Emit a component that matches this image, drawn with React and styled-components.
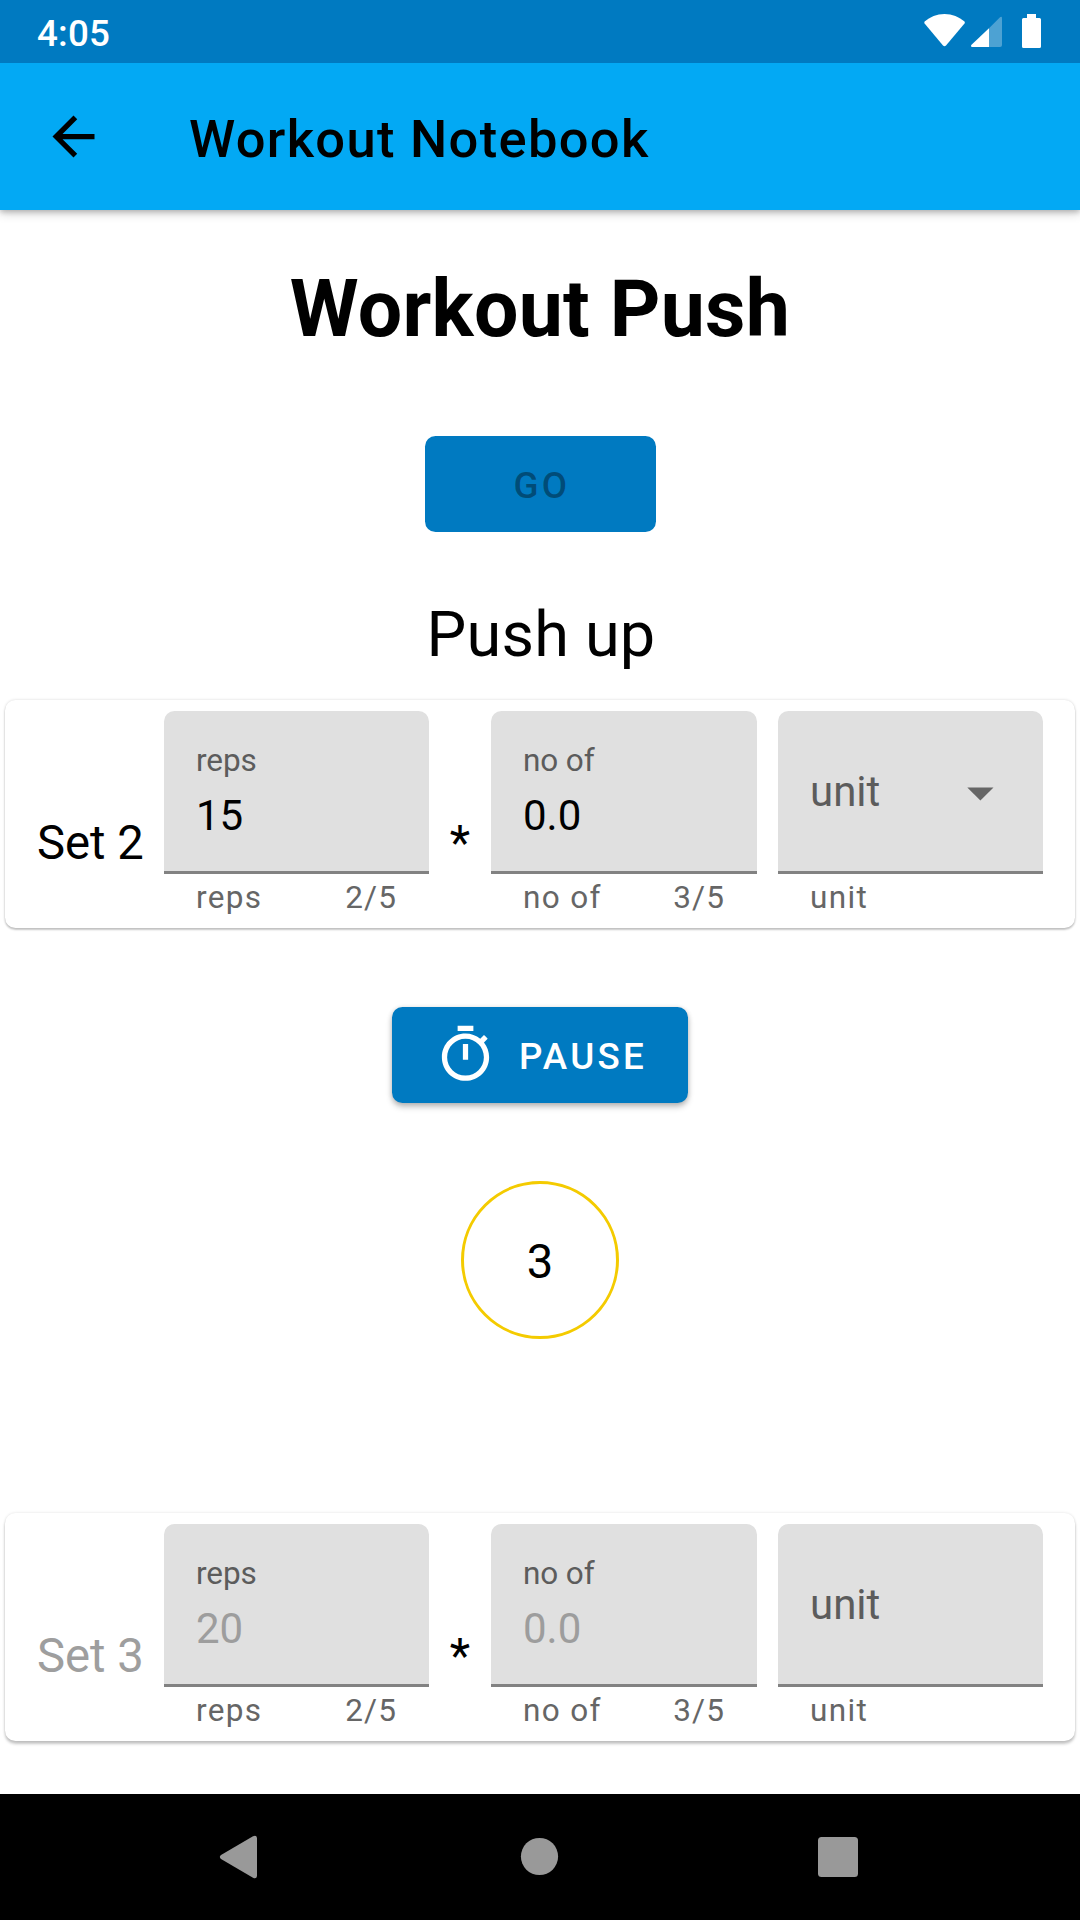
import React from "react";
import styled, { createGlobalStyle } from "styled-components";

const GlobalStyle = createGlobalStyle`
  * { box-sizing: border-box; }
  body { margin: 0; background: #fff; }
`;

const Screen = styled.div`
  display: flex;
  flex-direction: column;
  width: 1080px;
  height: 1920px;
  overflow: hidden;
  background: #fff;
  color: #000;
  font-family: Roboto, "Noto Sans", sans-serif;
`;

const StatusBar = styled.header`
  position: relative;
  z-index: 1;
  display: flex;
  justify-content: space-between;
  align-items: center;
  flex: none;
  height: 63px;
  padding: 3px 36px 0 37px;
  background: #007ac1;
`;

const Clock = styled.span`
  padding-top: 1px;
  color: #fff;
  font-size: 36.75px;
  font-weight: 500;
  line-height: 44px;
  letter-spacing: 0.2px;
`;

const StatusIcons = styled.svg`
  display: block;
  width: 124px;
  height: 40px;
  margin-top: -5px;
`;

const AppBar = styled.nav`
  display: flex;
  align-items: center;
  flex: none;
  height: 147px;
  padding-left: 42px;
  background: #03a9f4;
  box-shadow: 0 3px 10px rgba(0, 0, 0, 0.2), 0 2px 5px rgba(0, 0, 0, 0.18);
`;

const BackIcon = styled.svg`
  display: block;
  width: 63px;
  height: 63px;
`;

const AppTitle = styled.span`
  margin-left: 84px;
  padding-top: 4px;
  font-size: 52.5px;
  font-weight: 500;
  line-height: 62px;
  letter-spacing: 1.3px;
`;

const Content = styled.main`
  display: flex;
  flex-direction: column;
  align-items: center;
  flex: 1;
`;

const Heading = styled.h1`
  margin: 53px 0 81px;
  font-size: 78.75px;
  font-weight: 700;
  line-height: 92px;
  letter-spacing: 0.25px;
`;

const Button = styled.button`
  display: flex;
  align-items: center;
  justify-content: center;
  gap: 22px;
  width: ${(p) => p.$width}px;
  height: 96px;
  padding: 4px 0 0 ${(p) => (p.disabled ? 4 : 1)}px;
  border: 0;
  border-radius: 10.5px;
  background: #007ac1;
  color: ${(p) => (p.disabled ? "rgba(0, 0, 0, 0.38)" : "#fff")};
  box-shadow: ${(p) =>
    p.disabled ? "none" : "0 4px 6px rgba(0, 0, 0, 0.22), 0 1px 5px rgba(0, 0, 0, 0.16)"};
  font-family: inherit;
  font-size: 36.75px;
  font-weight: 500;
  line-height: 44px;
  letter-spacing: 0.0893em;
`;

const TimerIcon = styled.svg`
  display: block;
  width: 63px;
  height: 63px;
  margin-top: -5px;
`;

const Exercise = styled.h2`
  margin: 66px 0 28px;
  padding-left: 2px;
  font-size: 63px;
  font-weight: 400;
  line-height: 74px;
  letter-spacing: 0.2px;
`;

const Card = styled.section`
  display: flex;
  align-items: flex-start;
  width: 1070px;
  height: 228px;
  padding: 11px 32px 0;
  border-radius: 10.5px;
  background: #fff;
  box-shadow: ${(p) =>
    p.$low
      ? "0 3px 3px rgba(0, 0, 0, 0.22), 0 0 3px rgba(0, 0, 0, 0.12)"
      : "0 2px 2px rgba(0, 0, 0, 0.2), 0 0 3px rgba(0, 0, 0, 0.16)"};
`;

const SetName = styled.span`
  flex: none;
  width: 127px;
  margin-top: 104px;
  color: ${(p) => (p.$muted ? "#9e9e9e" : "#000")};
  font-size: 47.25px;
  line-height: 56px;
  white-space: nowrap;
`;

const Times = styled.span`
  flex: none;
  width: 62px;
  margin-top: 104px;
  font-size: 47.25px;
  line-height: 56px;
  text-align: center;
`;

const Field = styled.div`
  flex: none;
  width: ${(p) => p.$width}px;
  margin-left: ${(p) => p.$gap || 0}px;
`;

const FieldBox = styled.div`
  display: flex;
  flex-direction: column;
  height: 163px;
  padding: 31px 32px 0;
  border-bottom: 3px solid #828282;
  border-radius: 10.5px 10.5px 0 0;
  background: #e0e0e0;
`;

const SelectBox = styled(FieldBox)`
  flex-direction: row;
  align-items: center;
  justify-content: space-between;
  padding: 2px 49px 0 32px;
  color: #5c5c5c;
  font-size: 42px;
  line-height: 50px;
`;

const FieldLabel = styled.span`
  color: #5c5c5c;
  font-size: 31.5px;
  line-height: 37px;
  letter-spacing: -0.1px;
`;

const FieldValue = styled.span`
  margin-top: 12px;
  color: ${(p) => (p.$muted ? "#9d9d9d" : "#000")};
  font-size: 42px;
  line-height: 49px;
`;

const Caret = styled.svg`
  display: block;
  width: 27px;
  height: 14px;
  margin-top: 3px;
`;

const Helper = styled.div`
  display: flex;
  justify-content: space-between;
  margin-top: 5px;
  padding: 0 32px;
  color: #666;
  font-size: 31.5px;
  line-height: 37px;
  letter-spacing: 1.35px;
`;

const Counter = styled.span`
  letter-spacing: 1.1px;
`;

const PauseArea = styled.div`
  margin: 79px 0 78px;
`;

const Countdown = styled.div`
  display: flex;
  align-items: center;
  justify-content: center;
  width: 158px;
  height: 158px;
  margin-bottom: 174px;
  padding-top: 3px;
  border: 3px solid #f4cb00;
  border-radius: 50%;
  font-size: 47.25px;
  line-height: 56px;
`;

const NavBar = styled.footer`
  display: flex;
  align-items: center;
  flex: none;
  gap: 236px;
  height: 126px;
  padding-left: 208px;
  background: #000;
`;

const NavIcon = styled.svg`
  display: block;
  width: 64px;
  height: 64px;
  fill: #999;
`;

function TextField({ label, value, count, width, muted }) {
  return (
    <Field $width={width}>
      <FieldBox>
        <FieldLabel>{label}</FieldLabel>
        <FieldValue $muted={muted}>{value}</FieldValue>
      </FieldBox>
      <Helper>
        <span>{label}</span>
        <Counter>{count}</Counter>
      </Helper>
    </Field>
  );
}

function SetCard({ name, reps, amount, muted }) {
  return (
    <Card $low={muted}>
      <SetName $muted={muted}>{name}</SetName>
      <TextField label="reps" value={reps} count="2/5" width={265} muted={muted} />
      <Times>*</Times>
      <TextField label="no of" value={amount} count="3/5" width={266} muted={muted} />
      <Field $width={265} $gap={21}>
        <SelectBox>
          <span>unit</span>
          {!muted && (
            <Caret viewBox="0 0 27 14">
              <path d="M0.3 0.5h26.2L13.4 13.6z" fill="#666" />
            </Caret>
          )}
        </SelectBox>
        <Helper>
          <span>unit</span>
        </Helper>
      </Field>
    </Card>
  );
}

export default function App() {
  return (
    <Screen>
      <GlobalStyle />
      <StatusBar>
        <Clock>4:05</Clock>
        <StatusIcons viewBox="0 0 124 40">
          <path
            d="M4.6 10.6C10 6.1 16.7 3 24.5 3s14.600 3.100 20 7.600q.7.900 0 1.900L26 34.500q-1.500 1.600-3 0L4.600 12.500q-.700-1 0-1.900z"
            fill="#fff"
          />
          <path d="M69 17.300 80 6.300q2-1.300 2 1V34q0 2-2 2H69z" fill="#fff" opacity="0.3" />
          <path d="M69 17.300V36H52.200q-2-.5-.7-2.200z" fill="#fff" />
          <path
            d="M107 3h9v4h3.500q1.500 0 1.500 1.500v27q0 1.500-1.500 1.500h-16q-1.500 0-1.500-1.500v-27q0-1.500 1.500-1.500h3.500z"
            fill="#fff"
          />
        </StatusIcons>
      </StatusBar>
      <AppBar>
        <BackIcon viewBox="0 0 24 24">
          <path d="M20 11H7.830l5.590-5.590L12 4l-8 8 8 8 1.410-1.410L7.830 13H20v-2z" />
        </BackIcon>
        <AppTitle>Workout Notebook</AppTitle>
      </AppBar>
      <Content>
        <Heading>Workout Push</Heading>
        <Button $width={231} disabled>
          GO
        </Button>
        <Exercise>Push up</Exercise>
        <SetCard name="Set 2" reps="15" amount="0.0" />
        <PauseArea>
          <Button $width={296}>
            <TimerIcon viewBox="0 0 24 24">
              <path
                fill="#fff"
                d="M15 1H9v2h6V1zm-4 13h2V8h-2v6zm8.030-6.610 1.420-1.420c-.43-.51-.9-.99-1.410-1.410l-1.420 1.420C16.070 4.740 14.120 4 12 4c-4.970 0-9 4.030-9 9s4.020 9 9 9 9-4.030 9-9c0-2.120-.74-4.070-1.970-5.610zM12 20c-3.870 0-7-3.130-7-7s3.130-7 7-7 7 3.130 7 7-3.130 7-7 7z"
              />
            </TimerIcon>
            PAUSE
          </Button>
        </PauseArea>
        <Countdown>3</Countdown>
        <SetCard name="Set 3" reps="20" amount="0.0" muted />
      </Content>
      <NavBar>
        <NavIcon viewBox="0 0 64 64">
          <path d="M13 30 45 11.200q3.500-1.600 4 1.800V51q-.5 3.400-4 1.800L13 34q-2.300-2 0-4z" />
        </NavIcon>
        <NavIcon viewBox="0 0 64 64">
          <circle cx="31.500" cy="31.500" r="18.600" />
        </NavIcon>
        <NavIcon viewBox="0 0 64 64">
          <rect x="10" y="12" width="40" height="40" rx="3.500" />
        </NavIcon>
      </NavBar>
    </Screen>
  );
}
